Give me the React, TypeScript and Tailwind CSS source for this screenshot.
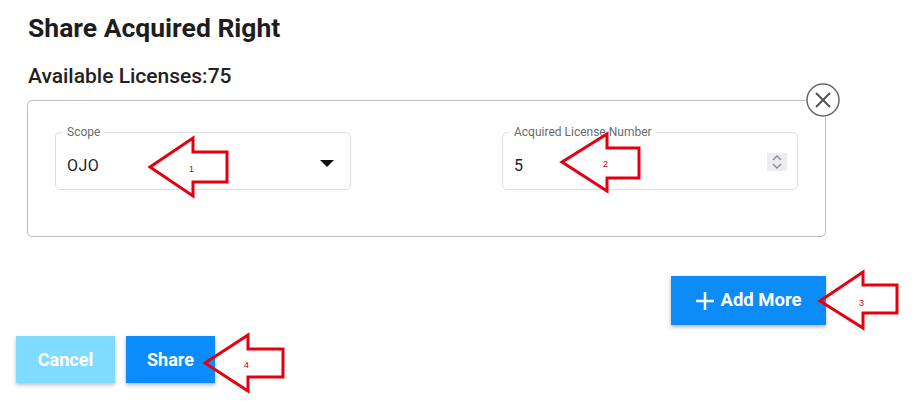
import React from "react";

// red callout arrow pointing left; coordinates are page pixels
function Callout({
  tipX,
  tipY,
  headX,
  headTop,
  headBottom,
  shaftTop,
  shaftBottom,
  right,
  label,
}: {
  tipX: number;
  tipY: number;
  headX: number;
  headTop: number;
  headBottom: number;
  shaftTop: number;
  shaftBottom: number;
  right: number;
  label: string;
}) {
  const pts = [
    [tipX, tipY],
    [headX, headTop],
    [headX, shaftTop],
    [right, shaftTop],
    [right, shaftBottom],
    [headX, shaftBottom],
    [headX, headBottom],
  ]
    .map((p) => p.join(","))
    .join(" ");
  return (
    <>
      <polygon
        points={pts}
        fill="none"
        stroke="#e3000f"
        strokeWidth="3"
        strokeLinejoin="miter"
      />
      <text
        x={headX - 4}
        y={tipY + 5}
        fill="#d40000"
        fontSize="9"
        fontFamily="'Liberation Sans', sans-serif"
      >
        {label}
      </text>
    </>
  );
}

function Field({
  label,
  value,
  children,
}: {
  label: string;
  value: string;
  children: React.ReactNode;
}) {
  return (
    <div className="relative w-[296px] h-[58px] rounded-[5px] border border-[#dedede] flex items-center pl-[11px] pr-[16px] pt-[10px]">
      <span className="absolute left-[6px] -top-[9px] bg-white px-[5px] text-[12px] text-[#6b6b6b] leading-[16px]">
        {label}
      </span>
      <span className="flex-1 text-[16px] text-[#222] tracking-[0.5px]">
        {value}
      </span>
      {children}
    </div>
  );
}

export default function App() {
  return (
    <div
      className="relative w-[914px] h-[414px] bg-white overflow-hidden"
      style={{ fontFamily: "Roboto, 'Liberation Sans', sans-serif" }}
    >
      <div className="flex flex-col pl-[27px] pt-[13px] w-[826px]">
        <h1 className="text-[26.5px] font-bold text-[#1d1d1d] leading-[30px] pl-[1px]">
          Share Acquired Right
        </h1>
        <p className="mt-[21px] text-[21px] font-medium text-[#222] leading-[24px] pl-[1px]">
          Available Licenses:75
        </p>

        {/* license row card */}
        <div className="relative mt-[12px] h-[137px] rounded-[5px] border border-[#bdbdbd] flex justify-between px-[27px] pt-[31px]">
          <Field label="Scope" value="OJO">
            <svg width="14" height="7" viewBox="0 0 14 7" className="-mt-[6px]">
              <path d="M0 0H14L7 7Z" fill="#111" />
            </svg>
          </Field>
          <Field label="Acquired License Number" value="5">
            <div className="-mt-[8px] -mr-[6px] w-[20px] h-[18px] bg-[#ebebf0] flex flex-col items-center justify-center gap-[2px]">
              <svg width="10" height="6" viewBox="0 0 10 6">
                <path d="M1 5L5 1L9 5" fill="none" stroke="#8a8a8a" strokeWidth="1.3" />
              </svg>
              <svg width="10" height="6" viewBox="0 0 10 6">
                <path d="M1 1L5 5L9 1" fill="none" stroke="#8a8a8a" strokeWidth="1.3" />
              </svg>
            </div>
          </Field>
          <div className="absolute -right-[15px] -top-[18px] w-[34px] h-[34px] rounded-full bg-white flex items-center justify-center">
            <svg width="34" height="34" viewBox="0 0 34 34">
              <circle cx="17" cy="17" r="16" fill="white" stroke="#666" strokeWidth="1.5" />
              <path d="M10 10L24 24M24 10L10 24" stroke="#555" strokeWidth="2" />
            </svg>
          </div>
        </div>

        <div className="flex justify-end mt-[39px]">
          <button className="w-[155px] h-[49px] bg-[#0b8cf6] text-white text-[18.5px] font-bold flex items-center justify-center gap-[5px] shadow-[0_2px_4px_rgba(0,0,0,0.3)]">
            <svg width="20" height="20" viewBox="0 0 20 20">
              <path d="M10 1V19M1 10H19" stroke="white" strokeWidth="2.5" />
            </svg>
            Add More
          </button>
        </div>
      </div>

      <div className="flex gap-[11px] pl-[16px] mt-[11px]">
        <button className="w-[99px] h-[47px] bg-[#80dcff] text-white text-[18px] font-bold shadow-[0_2px_4px_rgba(0,0,0,0.25)]">
          Cancel
        </button>
        <button className="w-[89px] h-[47px] bg-[#0a8cfc] text-white text-[18px] font-bold shadow-[0_2px_4px_rgba(0,0,0,0.3)]">
          Share
        </button>
      </div>

      {/* annotation arrows drawn over the form */}
      <svg className="absolute left-0 top-0 pointer-events-none" width="914" height="414">
        <Callout tipX={150} tipY={167} headX={193} headTop={138} headBottom={196} shaftTop={152} shaftBottom={182} right={227} label="1" />
        <Callout tipX={562} tipY={162} headX={607} headTop={134} headBottom={191} shaftTop={148} shaftBottom={178} right={639} label="2" />
        <Callout tipX={820} tipY={301} headX={863} headTop={272} headBottom={328} shaftTop={285} shaftBottom={313} right={897} label="3" />
        <Callout tipX={205} tipY={363} headX={248} headTop={335} headBottom={391} shaftTop={349} shaftBottom={377} right={283} label="4" />
      </svg>
    </div>
  );
}
